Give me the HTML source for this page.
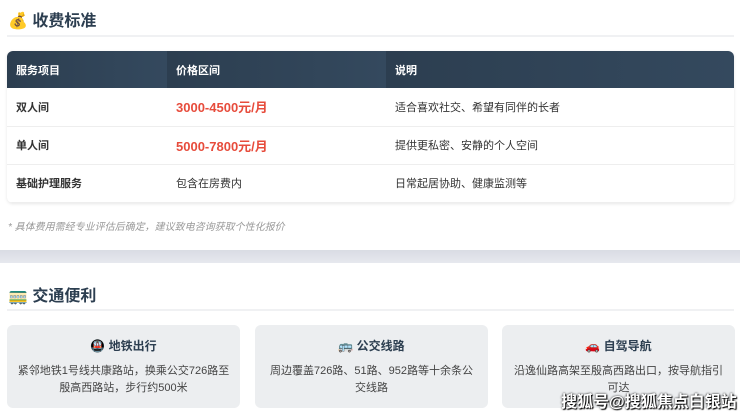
<html><head><style>
body{margin:0;width:740px;height:414px;overflow:hidden;background:#fff;font-family:"Liberation Sans","Noto Sans CJK SC",sans-serif;position:relative}
.t{position:absolute;font-size:16px;font-weight:bold;color:#2c3e50}
.hr{position:absolute;left:7px;width:727px;height:2px;background:#f0f1f3}
table{position:absolute;left:7px;top:51px;width:727px;border-collapse:collapse;font-size:11px;border-radius:6px;overflow:hidden;box-shadow:0 1px 3px rgba(0,0,0,.1)}
th{background:linear-gradient(90deg,#2c3e50,#34495e);color:#fff;text-align:left;height:37px;padding:0 0 0 9px;font-size:11px}
td{height:38px;padding:0 0 0 9px;color:#333;border-bottom:1px solid #eee}
td.p{color:#e74c3c;font-weight:bold;font-size:13px}
td.b{font-weight:bold}
.card{position:absolute;top:325px;width:233px;height:83px;background:#eceef0;border-radius:6px;text-align:center;font-size:11px;color:#444;line-height:17px}
.card h4{margin:13px 0 8px;font-size:12px;color:#2c3e50}
</style></head><body>
<div class="t" style="left:8px;top:7px">💰 收费标准</div>
<div class="hr" style="top:35px"></div>
<table><tr><th style="width:151px">服务项目</th><th style="width:210px">价格区间</th><th>说明</th></tr>
<tr><td class="b">双人间</td><td class="p">3000-4500元/月</td><td>适合喜欢社交、希望有同伴的长者</td></tr>
<tr><td class="b">单人间</td><td class="p">5000-7800元/月</td><td>提供更私密、安静的个人空间</td></tr>
<tr><td class="b">基础护理服务</td><td>包含在房费内</td><td>日常起居协助、健康监测等</td></tr></table>
<div style="position:absolute;left:8px;top:218px;font-size:10px;color:#999;font-style:italic">* 具体费用需经专业评估后确定，建议致电咨询获取个性化报价</div>
<div style="position:absolute;left:0;top:250px;width:740px;height:13px;background:linear-gradient(#d9dce4,#e6e8ee)"></div>
<div class="t" style="left:8px;top:282px">🚃 交通便利</div>
<div class="hr" style="top:309px"></div>
<div class="card" style="left:7px"><h4>🚇 地铁出行</h4>紧邻地铁1号线共康路站，换乘公交726路至<br>殷高西路站，步行约500米</div>
<div class="card" style="left:255px"><h4>🚌 公交线路</h4>周边覆盖726路、51路、952路等十余条公<br>交线路</div>
<div class="card" style="left:502px"><h4>🚗 自驾导航</h4>沿逸仙路高架至殷高西路出口，按导航指引<br>可达</div>
<div style="position:absolute;left:561px;top:388px;font-size:16px;color:#fff;font-weight:bold;text-shadow:0 0 2px #000,1px 1px 1px #000">搜狐号@搜狐焦点白银站</div>
</body></html>
